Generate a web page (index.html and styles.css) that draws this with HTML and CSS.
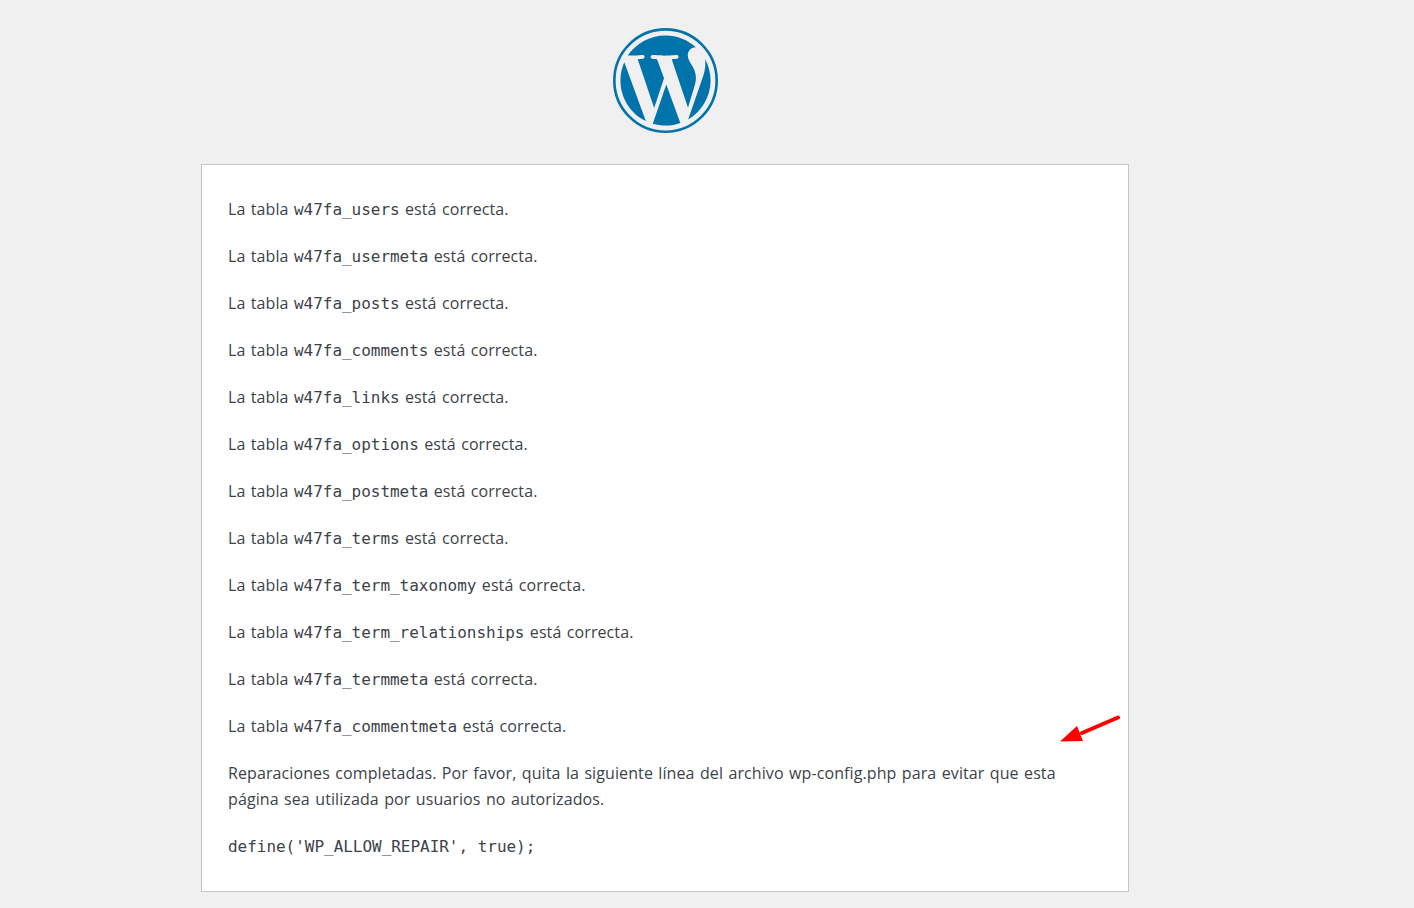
FILE: index.html
```html
<!DOCTYPE html>
<html lang="es">
<head>
<meta charset="utf-8">
<title>WordPress › Reparación de la base de datos</title>
<link rel="stylesheet" href="styles.css">
</head>
<body>
<main class="page">
  <h1 class="logo">
    <svg class="logo-icon" viewBox="0 0 24 24" aria-label="WordPress" role="img">
      <circle class="logo-ring" cx="12" cy="12" r="11.7"/>
      <path class="logo-disc" d="M21.469 6.825c.84 1.537 1.318 3.3 1.318 5.175 0 3.979-2.156 7.456-5.363 9.325l3.295-9.527c.615-1.54.82-2.771.82-3.864 0-.405-.026-.78-.07-1.11m-7.981.105c.647-.03 1.232-.105 1.232-.105.582-.075.514-.93-.067-.899 0 0-1.755.135-2.88.135-1.064 0-2.85-.15-2.85-.15-.585-.03-.661.855-.075.885 0 0 .54.061 1.125.09l1.68 4.605-2.37 7.08L5.354 6.9c.649-.03 1.234-.1 1.234-.1.585-.075.516-.93-.065-.896 0 0-1.746.138-2.874.138-.2 0-.438-.008-.69-.015C4.911 3.15 8.235 1.215 12 1.215c2.809 0 5.365 1.072 7.286 2.833-.046-.003-.091-.009-.141-.009-1.06 0-1.812.923-1.812 1.914 0 .89.513 1.643 1.06 2.531.411.72.89 1.643.89 2.977 0 .915-.354 1.994-.821 3.479l-1.075 3.585-3.9-11.61.001.014zM12 22.784c-1.059 0-2.081-.153-3.048-.437l3.237-9.406 3.315 9.087c.024.053.05.101.078.149-1.12.393-2.325.609-3.582.609M1.211 12c0-1.564.336-3.05.935-4.39L7.29 21.709C3.694 19.96 1.212 16.271 1.212 12"/>
    </svg>
  </h1>
  <section class="card">
    <p>La tabla <code>w47fa_users</code> está correcta.</p>
    <p>La tabla <code>w47fa_usermeta</code> está correcta.</p>
    <p>La tabla <code>w47fa_posts</code> está correcta.</p>
    <p>La tabla <code>w47fa_comments</code> está correcta.</p>
    <p>La tabla <code>w47fa_links</code> está correcta.</p>
    <p>La tabla <code>w47fa_options</code> está correcta.</p>
    <p>La tabla <code>w47fa_postmeta</code> está correcta.</p>
    <p>La tabla <code>w47fa_terms</code> está correcta.</p>
    <p>La tabla <code>w47fa_term_taxonomy</code> está correcta.</p>
    <p>La tabla <code>w47fa_term_relationships</code> está correcta.</p>
    <p>La tabla <code>w47fa_termmeta</code> está correcta.</p>
    <p>La tabla <code>w47fa_commentmeta</code> está correcta.</p>
    <p>Reparaciones completadas. Por favor, quita la siguiente línea del archivo wp-config.php para evitar que esta página sea utilizada por usuarios no autorizados.</p>
    <p><code>define('WP_ALLOW_REPAIR', true);</code></p>
    <svg class="arrow" viewBox="0 0 64 30" aria-hidden="true"><path class="arrow-line" d="M58 2.5 L22 18"/><path class="arrow-head" d="M0 26.5 L17 11 L23 26 Z"/></svg>
  </section>
</main>
</body>
</html>
```
FILE: styles.css
```css
html, body {
  margin: 0;
  height: 908px;
  overflow: hidden;
  background: #f0f0f1;
}

body {
  color: #3c434a;
  font-family: "Open Sans", "Noto Sans", sans-serif;
  font-size: 16px;
  line-height: 26px;
}

.page {
  width: 928px;
  margin-left: 201px;
  padding-top: 28px;
}

.logo {
  display: flex;
  justify-content: center;
  margin: 0 0 31px;
}

.logo-icon {
  display: block;
  width: 105px;
  height: 105px;
}

.logo-ring {
  fill: none;
  stroke: #0073aa;
  stroke-width: 0.6;
}

.logo-disc {
  fill: #0073aa;
  transform-origin: 12px 12px;
  transform: scale(0.955);
}

.card {
  position: relative;
  box-sizing: border-box;
  height: 728px;
  padding: 31px 26px 0;
  background: #fff;
  border: 1px solid #c3c4c7;
}

.card p {
  margin: 0 0 21px;
  letter-spacing: 0.1px;
  word-spacing: 1.1px;
}

code {
  font-family: "DejaVu Sans Mono", "Liberation Mono", monospace;
  font-size: 16px;
  line-height: 1;
  letter-spacing: -0.03px;
  word-spacing: 0;
}

.arrow {
  position: absolute;
  left: 858px;
  top: 550px;
  width: 64px;
  height: 30px;
}

.arrow-line {
  fill: none;
  stroke: #f00;
  stroke-width: 4;
  stroke-linecap: round;
}

.arrow-head {
  fill: #f00;
}
```
